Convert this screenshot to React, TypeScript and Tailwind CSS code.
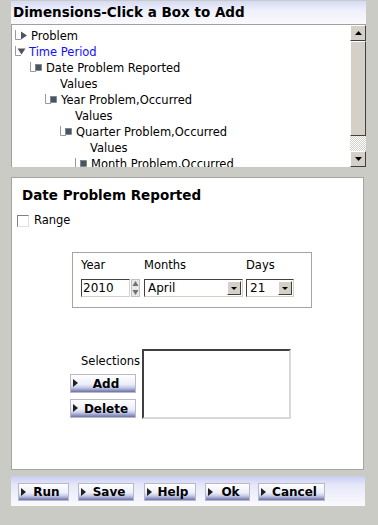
import React from "react";

const font = { fontFamily: '"DejaVu Sans", Verdana, sans-serif' };

function TreeIcon({ kind }: { kind: "right" | "down" | "square" }) {
  return (
    <svg width="16" height="16" viewBox="0 0 16 16" className="shrink-0">
      <path d="M3.5 1 V10.5 H9" stroke="#9a9a9a" strokeWidth="1" fill="none" />
      {kind === "right" && <path d="M9 2.5 L15 6.5 L9 10.5 Z" fill="#4c5560" />}
      {kind === "down" && <path d="M5.5 3.5 L13.5 3.5 L9.5 9.5 Z" fill="#4c5560" />}
      {kind === "square" && <rect x="8.5" y="3.5" width="6" height="6" fill="#4a5560" stroke="#6a7580" strokeWidth="0.6" />}
    </svg>
  );
}

function Row({ x, text, icon, blue, gap = 3 }: { x: number; text: string; icon?: "right" | "down" | "square"; blue?: boolean; gap?: number }) {
  return (
    <div className="flex h-[16px] items-center whitespace-nowrap" style={{ paddingLeft: x }}>
      {icon && <TreeIcon kind={icon} />}
      <span className={blue ? "text-[#1010ff]" : "text-black"} style={{ marginLeft: icon ? gap : 0 }}>
        {text}
      </span>
    </div>
  );
}

function Btn({ label, w, h = 19 }: { label: string; w: number; h?: number }) {
  return (
    <div
      className="relative flex items-center justify-center border border-[#b8b8c8] bg-[linear-gradient(to_bottom,#ffffff_0%,#eceef8_55%,#c4c8e6_75%,#6a72aa_100%)] text-[12px] font-bold text-black"
      style={{ width: w, height: h }}
    >
      <svg width="5" height="8" viewBox="0 0 5 8" className="absolute left-[2px] top-[4px]">
        <path d="M0 0 L5 4 L0 8 Z" fill="#202020" />
      </svg>
      <span className="pl-[6px] leading-none">{label}</span>
    </div>
  );
}

function Select({ w, value }: { w: number; value: string }) {
  return (
    <div
      className="flex h-[18px] items-center border border-t-[#404040] border-l-[#404040] border-r-[#d4d0c8] border-b-[#d4d0c8] bg-white"
      style={{ width: w }}
    >
      <span className="flex-1 pl-[3px] text-[12px] leading-none">{value}</span>
      <div className="mr-[1px] flex h-[14px] w-[14px] items-center justify-center border border-t-white border-l-white border-r-[#404040] border-b-[#404040] bg-[#d4d0c8]">
        <svg width="6" height="3" viewBox="0 0 6 3">
          <path d="M0 0 H6 L3 3 Z" fill="#000" />
        </svg>
      </div>
    </div>
  );
}

export default function App() {
  return (
    <div
      className="h-[525px] w-[378px] overflow-hidden bg-[#cbcbc6] pl-[11px] pt-[1px] text-[11.5px] text-black"
      style={font}
    >
      <div className="w-[355px]">
        {/* Header */}
        <div className="flex h-[23px] items-center bg-[linear-gradient(to_bottom,#d4daf2_0%,#eef0fa_40%,#fafafd_100%)] pl-[2px] text-[13.5px] font-bold">
          Dimensions-Click a Box to Add
        </div>

        {/* Tree panel */}
        <div className="flex h-[143px] border-l border-t border-[#a0a0a0] bg-white">
          <div className="flex-1 overflow-hidden pt-[4px]">
            <Row x={0} text="Problem" icon="right" gap={3} />
            <Row x={0} text="Time Period" icon="down" blue gap={1} />
            <Row x={15} text="Date Problem Reported" icon="square" gap={3} />
            <Row x={48} text="Values" />
            <Row x={30} text="Year Problem,Occurred" icon="square" gap={3} />
            <Row x={63} text="Values" />
            <Row x={45} text="Quarter Problem,Occurred" icon="square" gap={3} />
            <Row x={78} text="Values" />
            <Row x={60} text="Month Problem,Occurred" icon="square" gap={3} />
          </div>
          {/* Scrollbar */}
          <div className="flex w-[16px] flex-col bg-[#d4d0c8]">
            <div className="flex h-[16px] items-center justify-center border border-t-white border-l-white border-r-[#404040] border-b-[#404040] bg-[#d4d0c8]">
              <svg width="7" height="4" viewBox="0 0 7 4">
                <path d="M3.5 0 L7 4 H0 Z" fill="#000" />
              </svg>
            </div>
            <div className="h-[95px] border border-t-white border-l-white border-r-[#404040] border-b-[#404040] bg-[#d4d0c8]" />
            <div className="flex-1 bg-[repeating-conic-gradient(#d4d0c8_0%_25%,#ffffff_0%_50%)] bg-[length:2px_2px]" />
            <div className="flex h-[16px] items-center justify-center border border-t-white border-l-white border-r-[#404040] border-b-[#404040] bg-[#d4d0c8]">
              <svg width="7" height="4" viewBox="0 0 7 4">
                <path d="M0 0 H7 L3.5 4 Z" fill="#000" />
              </svg>
            </div>
          </div>
        </div>

        {/* Detail panel */}
        <div className="mt-[10px] flex h-[293px] w-[353px] flex-col border border-[#a0a8a0] bg-white">
          <div className="mt-[8px] pl-[10px] text-[13.5px] font-bold leading-[18px]">Date Problem Reported</div>
          <div className="mt-[10px] flex items-center pl-[5px]">
            <div className="h-[12px] w-[12px] border border-t-[#808080] border-l-[#808080] border-r-[#e0e0e0] border-b-[#e0e0e0] bg-white" />
            <span className="ml-[5px] leading-[13px]">Range</span>
          </div>

          {/* Date group */}
          <div className="ml-[60px] mt-[25px] h-[56px] w-[240px] border border-[#a0a8a0] pl-[8px] pt-[6px]">
            <div className="flex h-[14px] items-center leading-none">
              <span className="w-[63px]">Year</span>
              <span className="w-[102px]">Months</span>
              <span>Days</span>
            </div>
            <div className="mt-[6px] flex items-center">
              <div className="flex h-[18px] w-[49px] items-center border border-t-[#404040] border-l-[#404040] border-r-[#d4d0c8] border-b-[#d4d0c8] bg-white pl-[1px] text-[12px] leading-none">
                2010
              </div>
              <svg width="9" height="18" viewBox="0 0 9 18" className="ml-[1px]">
                <rect x="0.5" y="0.5" width="8" height="17" fill="#e8e8e8" stroke="#c0c0c0" />
                <path d="M4.5 2 L7.5 7 H1.5 Z" fill="#707070" />
                <path d="M1.5 11 H7.5 L4.5 16 Z" fill="#707070" />
              </svg>
              <div className="ml-[4px]">
                <Select w={99} value="April" />
              </div>
              <div className="ml-[3px]">
                <Select w={48} value="21" />
              </div>
            </div>
          </div>

          {/* Selections */}
          <div className="ml-[58px] mt-[41px] flex">
            <div className="flex w-[70px] flex-col items-end">
              <span className="mt-[6px] leading-[13px]">Selections</span>
              <div className="mt-[6px] self-start">
                <Btn label="Add" w={66} />
              </div>
              <div className="mt-[6px] self-start">
                <Btn label="Delete" w={66} />
              </div>
            </div>
            <div className="ml-[2px] h-[70px] w-[149px] border-2 border-t-[#404040] border-l-[#404040] border-r-[#d8d8d8] border-b-[#d8d8d8] bg-white" />
          </div>
        </div>

        {/* Button bar */}
        <div className="mt-[6px] flex h-[30px] w-[354px] items-center bg-[linear-gradient(to_bottom,#c8ccf0_0%,#e6e8f8_30%,#fafafd_100%)] pl-[7px] pt-[1px]">
          <Btn label="Run" w={51} h={18} />
          <div className="ml-[9px]"><Btn label="Save" w={56} h={18} /></div>
          <div className="ml-[10px]"><Btn label="Help" w={52} h={18} /></div>
          <div className="ml-[9px]"><Btn label="Ok" w={45} h={18} /></div>
          <div className="ml-[8px]"><Btn label="Cancel" w={67} h={18} /></div>
        </div>
      </div>
    </div>
  );
}
